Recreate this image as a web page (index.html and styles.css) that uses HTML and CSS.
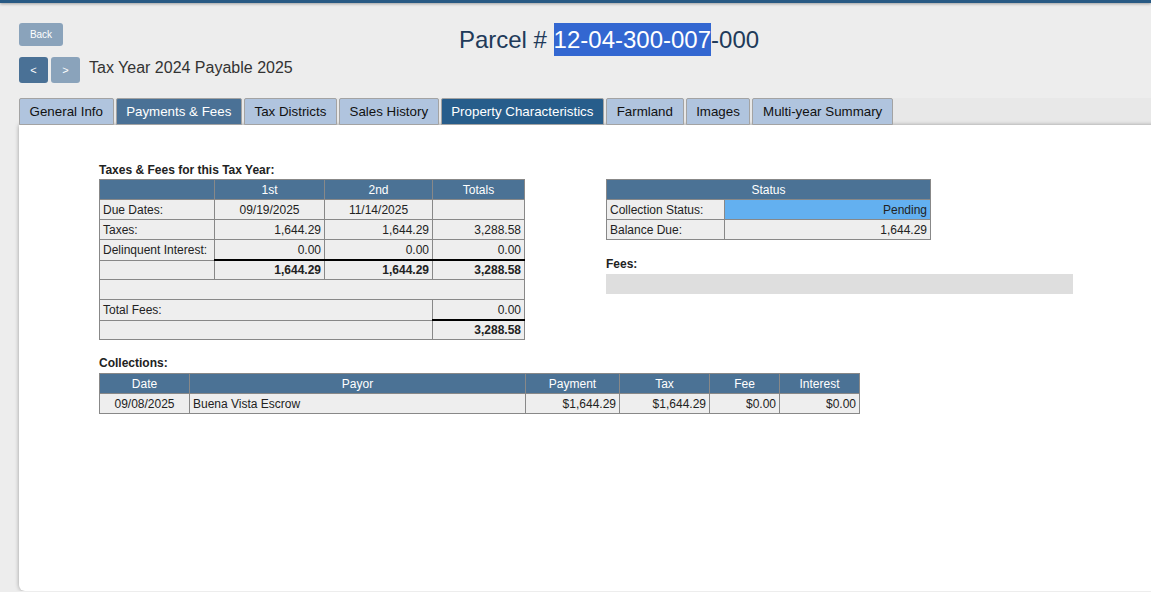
FILE: index.html
```html
<!DOCTYPE html>
<html lang="en">
<head>
<meta charset="utf-8">
<title>Parcel 12-04-300-007-000</title>
<link rel="stylesheet" href="styles.css">
</head>
<body>
<div class="topbar"></div>
<header class="head">
  <div class="head-row">
    <button class="btn btn-back">Back</button>
    <h1 class="parcel">Parcel # <span class="sel">12-04-300-007</span>-000</h1>
  </div>
  <div class="nav-row">
    <button class="btn btn-prev">&lt;</button>
    <button class="btn btn-next">&gt;</button>
    <span class="year">Tax Year 2024 Payable 2025</span>
  </div>
</header>
<nav class="tabs">
  <a class="tab">General Info</a>
  <a class="tab active">Payments &amp; Fees</a>
  <a class="tab">Tax Districts</a>
  <a class="tab">Sales History</a>
  <a class="tab hover">Property Characteristics</a>
  <a class="tab">Farmland</a>
  <a class="tab">Images</a>
  <a class="tab">Multi-year Summary</a>
</nav>
<main class="panel">
  <div class="cols">
    <section class="left">
      <h3 class="cap">Taxes &amp; Fees for this Tax Year:</h3>
      <table class="grid t-taxes">
        <colgroup><col class="tc1"><col class="tc2"><col class="tc3"><col class="tc4"></colgroup>
        <tr><th></th><th>1st</th><th>2nd</th><th>Totals</th></tr>
        <tr><td>Due Dates:</td><td class="c">09/19/2025</td><td class="c">11/14/2025</td><td></td></tr>
        <tr><td>Taxes:</td><td class="r">1,644.29</td><td class="r">1,644.29</td><td class="r">3,288.58</td></tr>
        <tr><td>Delinquent Interest:</td><td class="r">0.00</td><td class="r">0.00</td><td class="r">0.00</td></tr>
        <tr class="sum"><td></td><td class="r b thick">1,644.29</td><td class="r b thick">1,644.29</td><td class="r b thick">3,288.58</td></tr>
        <tr><td colspan="4"></td></tr>
        <tr><td colspan="3">Total Fees:</td><td class="r">0.00</td></tr>
        <tr class="sum"><td colspan="3"></td><td class="r b thick">3,288.58</td></tr>
      </table>
    </section>
    <section class="right">
      <table class="grid t-status">
        <colgroup><col class="sc1"><col class="sc2"></colgroup>
        <tr><th colspan="2">Status</th></tr>
        <tr><td>Collection Status:</td><td class="r pending">Pending</td></tr>
        <tr><td>Balance Due:</td><td class="r">1,644.29</td></tr>
      </table>
      <h3 class="cap fees-cap">Fees:</h3>
      <div class="fees-bar"></div>
    </section>
  </div>
  <h3 class="cap coll-cap">Collections:</h3>
  <table class="grid t-coll">
    <colgroup><col class="k1"><col class="k2"><col class="k3"><col class="k4"><col class="k5"><col class="k6"></colgroup>
    <tr><th>Date</th><th>Payor</th><th>Payment</th><th>Tax</th><th>Fee</th><th>Interest</th></tr>
    <tr><td class="c">09/08/2025</td><td>Buena Vista Escrow</td><td class="r">$1,644.29</td><td class="r">$1,644.29</td><td class="r">$0.00</td><td class="r">$0.00</td></tr>
  </table>
</main>
</body>
</html>
```
FILE: styles.css
```css
html, body {
  margin: 0;
  background: #ededed;
  font-family: "Liberation Sans", Arial, sans-serif;
  color: #222;
  overflow: hidden;
}

.topbar {
  height: 3px;
  background: #285a84;
  box-shadow: 0 1px 3px rgba(0, 0, 0, 0.35);
}

.head {
  padding: 20px 0 0 19px;
}

.head-row {
  display: flex;
  align-items: flex-start;
}

.btn {
  border: 0;
  border-radius: 3px;
  color: #fff;
  font-family: inherit;
  padding: 0;
  cursor: pointer;
}

.btn-back {
  width: 44px;
  height: 23px;
  background: #8aa3bb;
  font-size: 10px;
}

.parcel {
  flex: 1;
  margin: 0;
  padding-left: 4px;
  text-align: center;
  font-size: 24px;
  line-height: 33px;
  font-weight: normal;
  color: #213a59;
}

.sel {
  background: #3367d1;
  color: #fff;
  padding: 3px 0;
}

.nav-row {
  display: flex;
  align-items: center;
  margin-top: 1px;
}

.btn-prev,
.btn-next {
  width: 29px;
  height: 26px;
  font-size: 11px;
}

.btn-prev {
  background: #4a7196;
}

.btn-next {
  background: #8aa3bb;
  margin-left: 3px;
}

.year {
  margin-left: 9px;
  margin-bottom: 4px;
  font-size: 16px;
  color: #333;
}

.tabs {
  display: flex;
  gap: 2px;
  margin: 15px 0 0 19px;
  background: #e8e8e8;
}

.tab {
  font-size: 13.33px;
  line-height: 25px;
  padding: 0 9.6px;
  border: 1px solid #a3a3a3;
  border-radius: 2px 2px 0 0;
  background: #b0c4de;
  color: #111;
}

.tab.active {
  background: #4a7196;
  color: #fff;
}

.tab.hover {
  background: #275d8b;
  color: #fff;
}

.panel {
  display: block;
  margin: 0 -20px 0 19px;
  background: #fff;
  min-height: 466px;
  box-sizing: border-box;
  padding: 38px 0 0 80px;
  border-radius: 0 0 0 6px;
  box-shadow: 0 0 4px rgba(0, 0, 0, 0.35);
}

.cap {
  font-size: 12px;
  font-weight: bold;
  line-height: 14px;
  margin: 0 0 2px;
  color: #222;
}

.cols {
  display: flex;
  align-items: flex-start;
}

.left {
  width: 425px;
}

.right {
  margin-left: 82px;
  margin-top: 16px;
}

.fees-cap {
  margin: 17px 0 3px;
}

.fees-bar {
  width: 467px;
  height: 20px;
  background: #dedede;
}

.coll-cap {
  margin: 16px 0 3px;
}

.grid {
  border-collapse: collapse;
  table-layout: fixed;
  font-size: 12px;
}

.grid th,
.grid td {
  border: 1px solid #888;
  padding: 0 3px;
  line-height: 18px;
  height: 19px;
  white-space: nowrap;
}

.grid th {
  background: #4b7295;
  color: #fff;
  font-weight: normal;
}

.grid td {
  background: #eee;
  color: #222;
}

.grid .sum td {
  height: 18px;
}

.grid .r { text-align: right; }
.grid .c { text-align: center; }
.grid .b { font-weight: bold; }
.grid .thick { border-top: 2px solid #000; }
.grid .pending { background: #63b0f0; }

.t-taxes { width: 425px; }
.tc1 { width: 115px; }
.tc2 { width: 110px; }
.tc3 { width: 108px; }
.tc4 { width: 92px; }

.t-status { width: 324px; }
.sc1 { width: 118px; }
.sc2 { width: 206px; }

.t-coll { width: 760px; }
.k1 { width: 90px; }
.k2 { width: 336px; }
.k3 { width: 94px; }
.k4 { width: 90px; }
.k5 { width: 70px; }
.k6 { width: 80px; }
```
